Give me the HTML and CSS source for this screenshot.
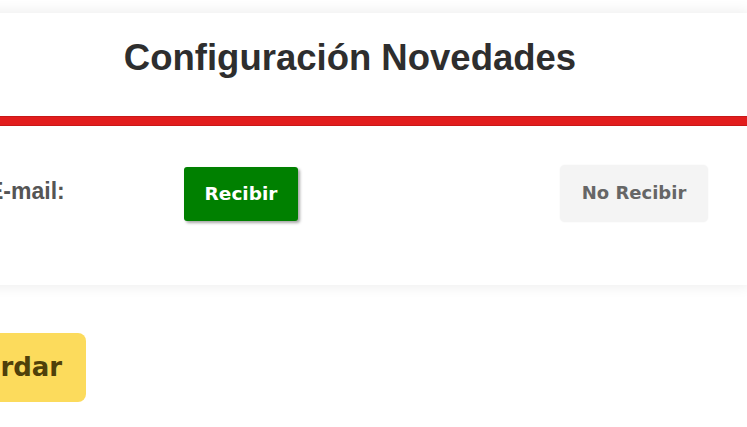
FILE: index.html
```html
<!DOCTYPE html>
<html lang="es">
<head>
<meta charset="utf-8">
<title>Configuración Novedades</title>
<link rel="stylesheet" href="styles.css">
</head>
<body>
<div class="page">
  <section class="card">
    <header class="card-header">
      <h1 class="title">Configuración Novedades</h1>
    </header>
    <div class="red-bar"></div>
    <div class="card-body">
      <div class="option-row">
        <span class="label">E-mail:</span>
        <div class="cell"><button class="btn btn-on">Recibir</button></div>
        <div class="cell"><button class="btn btn-off">No Recibir</button></div>
      </div>
    </div>
  </section>
  <div class="actions">
    <button class="btn btn-save">Guardar</button>
  </div>
</div>
</body>
</html>
```
FILE: styles.css
```css
html, body {
  margin: 0;
  padding: 0;
  background: #ffffff;
  overflow: hidden;
  height: 100%;
}

.page {
  margin-left: -52px;
  width: 802px;
  padding-top: 13px;
  font-family: "Liberation Sans", Arial, sans-serif;
}

.card {
  background: #ffffff;
  box-shadow: 0 0 14px rgba(0, 0, 0, 0.09);
  height: 272px;
  display: flex;
  flex-direction: column;
}

.card-header {
  height: 103px;
  display: flex;
  align-items: center;
  justify-content: center;
}

.title {
  margin: 0;
  font-size: 36.5px;
  font-weight: 700;
  color: #2e2e2e;
  line-height: 40px;
  padding-bottom: 14px;
  padding-left: 2px;
}

.red-bar {
  height: 10px;
  background: #e21d1d;
  box-shadow: inset 0 1px 0 #c81818, inset 0 -1px 0 #c81818;
}

.card-body {
  padding: 39px 0 0 40px;
}

.option-row {
  display: grid;
  grid-template-columns: 196px 376px 148px;
  align-items: center;
}

.label {
  font-size: 23px;
  font-weight: 700;
  color: #555555;
  padding-bottom: 5px;
}

.cell {
  display: flex;
  align-items: center;
}

.btn {
  font-family: "DejaVu Sans", Verdana, sans-serif;
  font-weight: 700;
  border: none;
  cursor: pointer;
}

.btn-on {
  background: #008000;
  color: #ffffff;
  font-size: 18.5px;
  line-height: 22px;
  padding: 16px 18px;
  width: 114px;
  border-radius: 3px;
  box-shadow: 2px 2px 3px rgba(0, 0, 0, 0.35);
}

.btn-off {
  background: #f4f4f4;
  color: #666666;
  font-size: 18px;
  line-height: 22px;
  padding: 17px 20px 18px;
  width: 148px;
  border-radius: 5px;
  box-shadow: 0 0 2px rgba(0, 0, 0, 0.06);
}

.actions {
  padding-top: 48px;
  margin-left: -29px;
}

.btn-save {
  background: #fcdb5c;
  color: #4f400a;
  font-size: 26px;
  line-height: 28px;
  padding: 20px 24px 21px;
  border-radius: 8px;
}
```
